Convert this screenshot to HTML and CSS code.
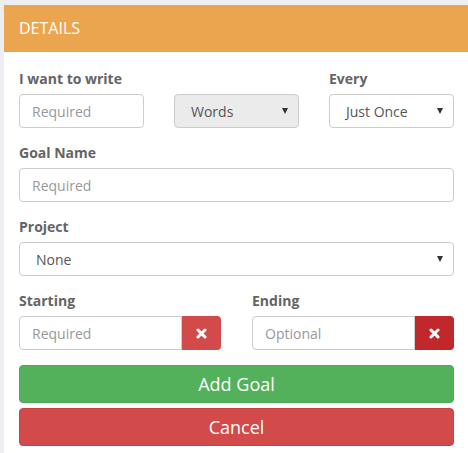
FILE: index.html
```
<!DOCTYPE html>
<html>
<head>
<meta charset="utf-8">
<link rel="stylesheet" href="styles.css">
</head>
<body>
<div class="panel">
  <div class="panel-heading">DETAILS</div>
  <div class="panel-body">
    <div class="row three">
      <div class="col">
        <label class="lbl">I want to write</label>
        <div class="field"><span class="ph">Required</span></div>
      </div>
      <div class="col">
        <label class="lbl">&nbsp;</label>
        <div class="field select grey"><span class="val">Words</span><span class="caret"></span></div>
      </div>
      <div class="col">
        <label class="lbl">Every</label>
        <div class="field select"><span class="val">Just Once</span><span class="caret"></span></div>
      </div>
    </div>
    <div class="group">
      <label class="lbl">Goal Name</label>
      <div class="field"><span class="ph">Required</span></div>
    </div>
    <div class="group">
      <label class="lbl">Project</label>
      <div class="field select"><span class="val">None</span><span class="caret"></span></div>
    </div>
    <div class="row two">
      <div class="col">
        <label class="lbl">Starting</label>
        <div class="input-group">
          <div class="field joined"><span class="ph">Required</span></div>
          <div class="addon red"><svg width="11" height="11" viewBox="0 0 11 11"><path d="M2 2 L9 9 M9 2 L2 9" stroke="#fff" stroke-width="3" stroke-linecap="round"/></svg></div>
        </div>
      </div>
      <div class="col">
        <label class="lbl">Ending</label>
        <div class="input-group">
          <div class="field joined"><span class="ph">Optional</span></div>
          <div class="addon dark"><svg width="11" height="11" viewBox="0 0 11 11"><path d="M2 2 L9 9 M9 2 L2 9" stroke="#fff" stroke-width="3" stroke-linecap="round"/></svg></div>
        </div>
      </div>
    </div>
    <div class="btn green">Add Goal</div>
    <div class="btn cancel">Cancel</div>
  </div>
</div>
</body>
</html>
```
FILE: styles.css
```
html, body {
  margin: 0;
  padding: 0;
}
body {
  background: #eceef1;
  font-family: "Open Sans", "Liberation Sans", sans-serif;
  font-size: 14px;
  color: #555;
  overflow: hidden;
  width: 468px;
  height: 453px;
}
.panel {
  margin: 5px 0 0 4px;
  width: 465px;
  background: #fff;
}
.panel-heading {
  background: #eca54f;
  color: #fff;
  font-size: 16px;
  line-height: 23px;
  padding: 12px 15px;
}
.panel-body {
  padding: 17px 15px 10px 15px;
}
.row {
  display: flex;
  gap: 30px;
  margin-bottom: 15px;
}
.row .col {
  flex: 1 1 0;
  min-width: 0;
}
.two {
  gap: 31px;
}
.group {
  margin-bottom: 15px;
}
.lbl {
  display: block;
  font-weight: 700;
  color: #646464;
  line-height: 20px;
  margin-bottom: 5px;
}
.field {
  box-sizing: border-box;
  height: 34px;
  border: 1px solid #ccc;
  border-radius: 4px;
  background: #fff;
  padding: 2px 12px 0 12px;
  display: flex;
  align-items: center;
  line-height: 20px;
}
.ph {
  color: #999;
}
.select {
  padding: 2px 10px 0 16px;
  justify-content: space-between;
}
.select .val {
  color: #555;
}
.grey {
  background: #ebebeb;
}
.caret {
  width: 0;
  height: 0;
  border-left: 3px solid transparent;
  border-right: 3px solid transparent;
  border-top: 6px solid #333;
  margin-top: -2px;
}
.input-group {
  display: flex;
}
.input-group .joined {
  flex: 1 1 auto;
  border-radius: 4px 0 0 4px;
}
.addon {
  width: 39px;
  height: 34px;
  flex: 0 0 39px;
  border-radius: 0 4px 4px 0;
  display: flex;
  align-items: center;
  justify-content: center;
}
.addon.red {
  background: #d24a4a;
}
.addon.dark {
  background: #c1282b;
}
.btn {
  box-sizing: border-box;
  height: 38px;
  border-radius: 4px;
  color: #fff;
  font-size: 18px;
  display: flex;
  align-items: center;
  justify-content: center;
}
.green {
  background: #52b15a;
  border: 1px solid #4ca854;
  margin-bottom: 5px;
}
.cancel {
  background: #d24a4a;
  border: 1px solid #c94343;
}
```
